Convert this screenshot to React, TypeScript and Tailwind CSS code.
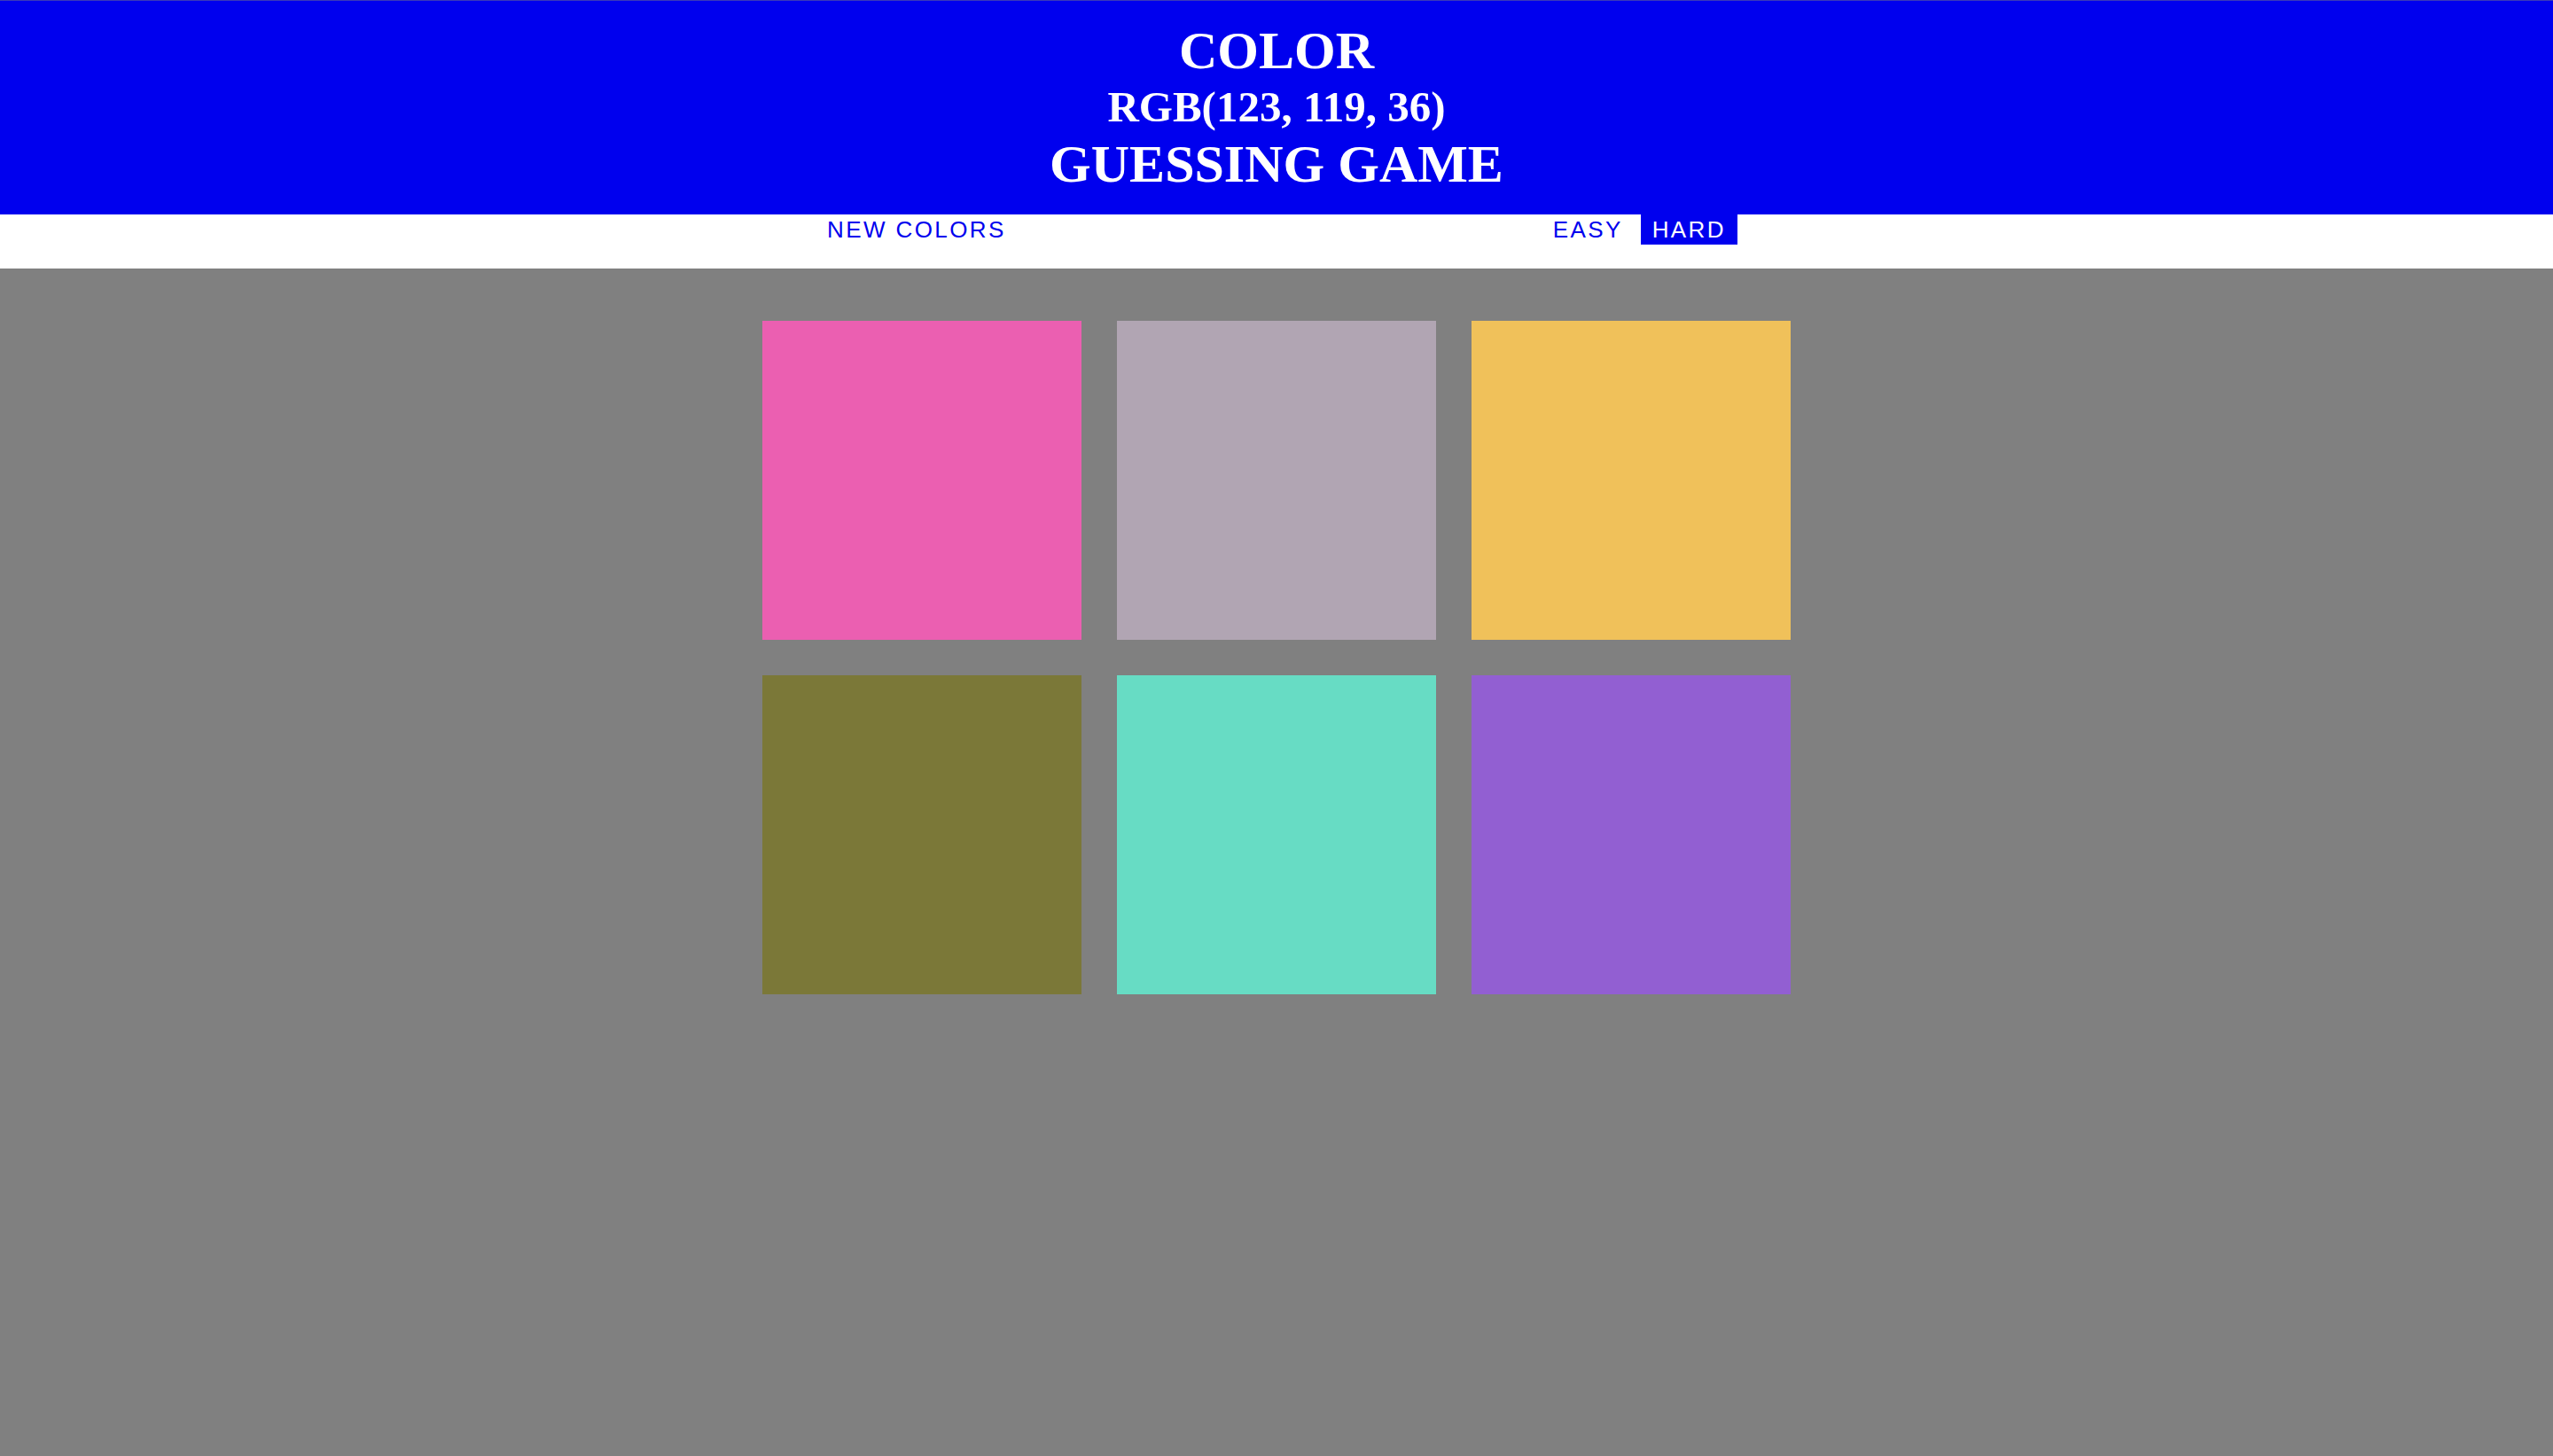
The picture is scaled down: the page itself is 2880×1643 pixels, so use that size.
import React from "react";

const colors = ["#eb5fb1", "#b1a5b3", "#f0c15a", "#7b7838", "#67dcc4", "#925fd2"];

export default function App() {
  return (
    <div className="min-h-[1643px] bg-[#808080] flex flex-col">
      <header className="h-[242px] bg-[#0000ee] border-t border-[#3a3ab8] text-white text-center font-bold font-['Liberation_Serif',serif] flex flex-col items-center pt-[26px]">
        <div className="h-[60px] leading-[60px] text-[60px] whitespace-nowrap">COLOR</div>
        <div className="h-[68px] leading-[68px] text-[49px] whitespace-nowrap">RGB(123, 119, 36)</div>
        <div className="h-[60px] leading-[60px] text-[60px] whitespace-nowrap">GUESSING GAME</div>
      </header>
      <nav className="h-[61px] bg-white flex justify-center items-start font-['Liberation_Sans',Arial,sans-serif] text-[26px] tracking-[2.4px]">
        <button className="h-[34px] leading-[34px] px-[13px] text-[#0000ee] uppercase">New Colors</button>
        <span className="w-[591px]" />
        <button className="h-[34px] leading-[34px] px-[13px] text-[#0000ee]">EASY</button>
        <span className="w-[7px]" />
        <button className="h-[34px] leading-[34px] px-[13px] bg-[#0000ee] text-white">HARD</button>
      </nav>
      <main className="flex justify-center pt-[59px]">
        <div className="grid grid-cols-3 gap-[40px]">
          {colors.map((c) => (
            <div key={c} className="w-[360px] h-[360px]" style={{ backgroundColor: c }} />
          ))}
        </div>
      </main>
    </div>
  );
}
